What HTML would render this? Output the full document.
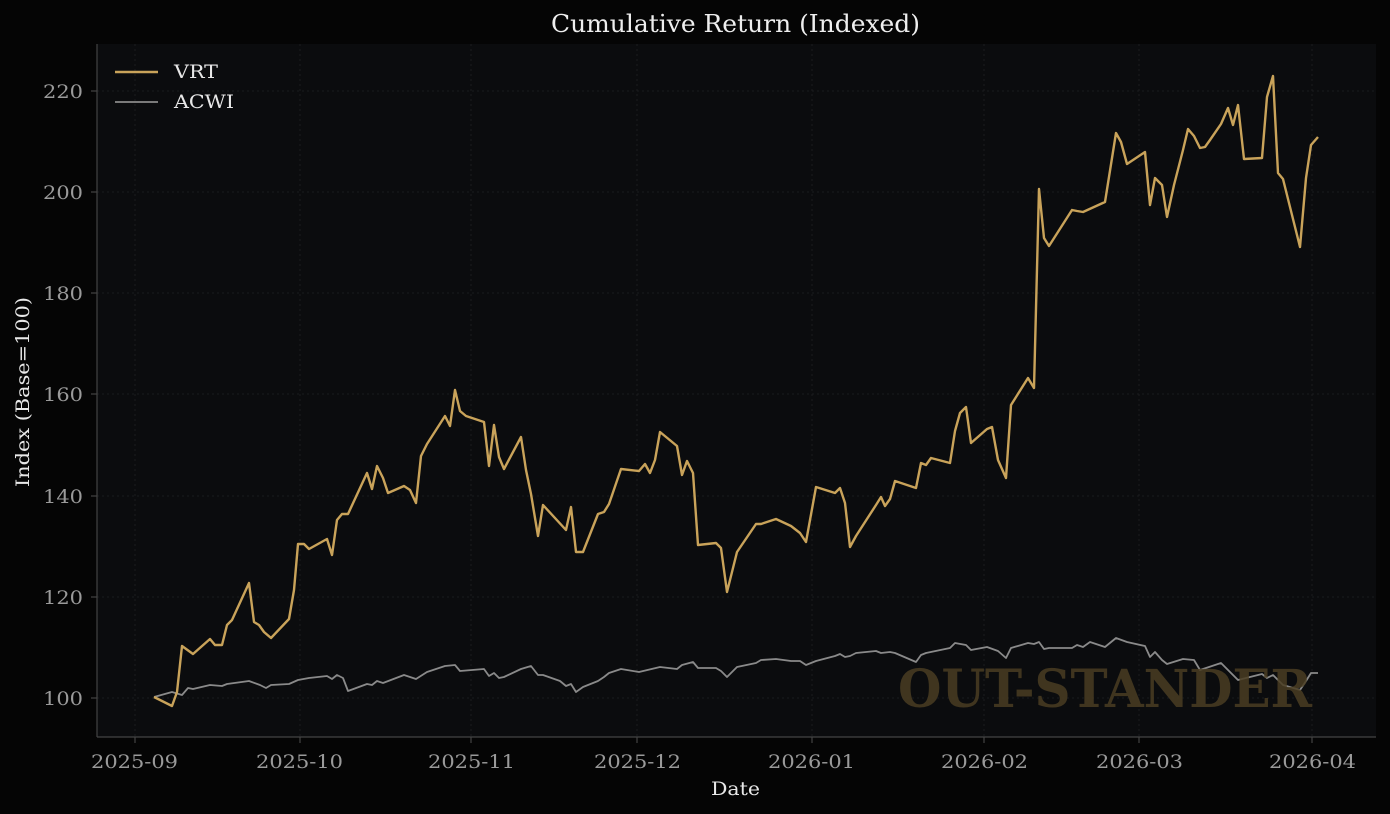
<!DOCTYPE html>
<html><head><style>
html,body{margin:0;padding:0;background:#050505;}
svg{display:block;font-family:"DejaVu Serif","Liberation Serif",serif;}
</style></head><body>
<svg width="1390" height="814" viewBox="0 0 1390 814">
<rect width="1390" height="814" fill="#050505"/>
<rect x="97" y="44" width="1279" height="693" fill="#0b0c0e"/>
<g stroke="#202124" stroke-width="0.8" stroke-dasharray="2,3">
<line x1="97" x2="1376" y1="698" y2="698"/><line x1="97" x2="1376" y1="597" y2="597"/>
<line x1="97" x2="1376" y1="496" y2="496"/><line x1="97" x2="1376" y1="394" y2="394"/>
<line x1="97" x2="1376" y1="293" y2="293"/><line x1="97" x2="1376" y1="192" y2="192"/>
<line x1="97" x2="1376" y1="91" y2="91"/>
<line y1="44" y2="737" x1="135" x2="135"/><line y1="44" y2="737" x1="300" x2="300"/>
<line y1="44" y2="737" x1="471" x2="471"/><line y1="44" y2="737" x1="637" x2="637"/>
<line y1="44" y2="737" x1="812" x2="812"/><line y1="44" y2="737" x1="984" x2="984"/>
<line y1="44" y2="737" x1="1139" x2="1139"/><line y1="44" y2="737" x1="1312" x2="1312"/>
</g>
<g stroke="#444" stroke-width="1.2" fill="none">
<line x1="97" y1="44" x2="97" y2="737"/><line x1="97" y1="737" x2="1376" y2="737"/>
<line x1="135" y1="737" x2="135" y2="743"/><line x1="300" y1="737" x2="300" y2="743"/>
<line x1="471" y1="737" x2="471" y2="743"/><line x1="637" y1="737" x2="637" y2="743"/>
<line x1="812" y1="737" x2="812" y2="743"/><line x1="984" y1="737" x2="984" y2="743"/>
<line x1="1139" y1="737" x2="1139" y2="743"/><line x1="1312" y1="737" x2="1312" y2="743"/>
<line x1="91" y1="698" x2="97" y2="698"/><line x1="91" y1="597" x2="97" y2="597"/>
<line x1="91" y1="496" x2="97" y2="496"/><line x1="91" y1="394" x2="97" y2="394"/>
<line x1="91" y1="293" x2="97" y2="293"/><line x1="91" y1="192" x2="97" y2="192"/>
<line x1="91" y1="91" x2="97" y2="91"/>
</g>
<polyline fill="none" stroke="#8a8a8a" stroke-width="1.8" stroke-linejoin="round" points="154,697 172,692 182,695 188,688 193,689 210,685 222,686 227,684 249,681 260,685 266,688 271,685 289,684 298,680 309,678 327,676 332,679 337,675 343,678 348,691 367,684 372,685 377,681 383,683 404,675 416,679 427,672 445,666 455,665 460,671 484,669 489,676 494,673 499,678 504,677 521,669 531,666 538,675 543,675 560,681 566,686 571,684 576,692 583,687 598,681 604,677 609,673 621,669 639,672 660,667 677,669 682,665 693,662 698,668 716,668 721,671 727,677 737,667 756,663 761,660 776,659 791,661 800,661 806,665 816,661 835,656 840,654 845,657 850,656 856,653 876,651 881,653 890,652 895,653 916,662 921,655 926,653 950,648 955,643 966,645 971,650 987,647 998,651 1006,658 1011,648 1028,643 1034,644 1039,642 1044,649 1049,648 1072,648 1077,645 1083,647 1090,642 1105,647 1116,638 1127,642 1145,646 1150,657 1155,652 1162,660 1167,664 1183,659 1194,660 1200,670 1221,663 1228,670 1238,680 1262,674 1267,678 1273,675 1278,680 1283,685 1300,690 1306,681 1311,673 1318,673"/>
<polyline fill="none" stroke="#c9a35a" stroke-width="2.4" stroke-linejoin="round" points="154,697 172,706 177,692 182,646 193,654 210,639 215,645 222,645 227,625 232,620 249,583 254,622 259,625 264,632 271,638 289,619 294,590 298,544 304,544 309,549 327,539 332,555 337,520 342,514 348,514 367,473 372,489 377,466 383,478 388,493 404,486 410,490 416,503 421,456 427,444 445,416 450,426 455,390 460,411 466,416 484,422 489,466 494,425 499,457 504,469 521,437 526,470 531,494 538,536 543,505 566,530 571,507 576,552 583,552 598,514 604,512 609,504 621,469 639,471 645,464 650,473 655,460 660,432 677,446 682,475 687,461 693,473 698,545 716,543 721,548 727,592 737,552 756,524 761,524 776,519 791,526 800,533 806,542 816,487 835,493 840,488 845,503 850,547 856,536 876,505 881,497 885,506 890,499 895,481 916,488 921,463 926,465 931,458 950,463 955,431 960,413 966,407 971,443 987,429 992,427 998,460 1006,478 1011,405 1028,378 1034,388 1039,189 1044,238 1049,246 1072,210 1077,211 1083,212 1105,202 1116,133 1121,142 1127,164 1145,152 1150,205 1155,178 1162,185 1167,217 1174,185 1183,150 1188,129 1194,136 1200,148 1205,147 1210,140 1221,124 1228,108 1233,125 1238,105 1244,159 1262,158 1267,97 1273,76 1278,173 1283,179 1300,247 1306,178 1311,145 1318,137"/>
<text x="898" y="707" font-size="52" font-weight="bold" fill="#4a3d22" fill-opacity="0.85" textLength="414" lengthAdjust="spacingAndGlyphs">OUT-STANDER</text>
<line x1="115" y1="72" x2="158" y2="72" stroke="#c9a35a" stroke-width="2.4"/>
<line x1="115" y1="102" x2="158" y2="102" stroke="#8a8a8a" stroke-width="1.8"/>
<text x="174" y="78" font-size="19" fill="#e8e8e8" textLength="44" lengthAdjust="spacingAndGlyphs">VRT</text>
<text x="174" y="108" font-size="19" fill="#e8e8e8" textLength="60" lengthAdjust="spacingAndGlyphs">ACWI</text>
<text x="551" y="32" font-size="24" fill="#eeeeee" textLength="369" lengthAdjust="spacingAndGlyphs">Cumulative Return (Indexed)</text>
<text x="711" y="795" font-size="19" fill="#e8e8e8" textLength="49" lengthAdjust="spacingAndGlyphs">Date</text>
<text transform="translate(29,487) rotate(-90)" font-size="19" fill="#e8e8e8" textLength="190" lengthAdjust="spacingAndGlyphs">Index (Base=100)</text>
<g font-size="19" fill="#9a9a9a">
<text x="43" y="705" textLength="40" lengthAdjust="spacingAndGlyphs">100</text>
<text x="43" y="604" textLength="40" lengthAdjust="spacingAndGlyphs">120</text>
<text x="43" y="503" textLength="40" lengthAdjust="spacingAndGlyphs">140</text>
<text x="43" y="401" textLength="40" lengthAdjust="spacingAndGlyphs">160</text>
<text x="43" y="300" textLength="40" lengthAdjust="spacingAndGlyphs">180</text>
<text x="43" y="199" textLength="40" lengthAdjust="spacingAndGlyphs">200</text>
<text x="43" y="98" textLength="40" lengthAdjust="spacingAndGlyphs">220</text>
</g>
<g font-size="19" fill="#9a9a9a">
<text x="91" y="768" textLength="87" lengthAdjust="spacingAndGlyphs">2025-09</text>
<text x="256" y="768" textLength="87" lengthAdjust="spacingAndGlyphs">2025-10</text>
<text x="428" y="768" textLength="87" lengthAdjust="spacingAndGlyphs">2025-11</text>
<text x="594" y="768" textLength="87" lengthAdjust="spacingAndGlyphs">2025-12</text>
<text x="768" y="768" textLength="87" lengthAdjust="spacingAndGlyphs">2026-01</text>
<text x="941" y="768" textLength="87" lengthAdjust="spacingAndGlyphs">2026-02</text>
<text x="1096" y="768" textLength="87" lengthAdjust="spacingAndGlyphs">2026-03</text>
<text x="1269" y="768" textLength="87" lengthAdjust="spacingAndGlyphs">2026-04</text>
</g>
</svg>
</body></html>
